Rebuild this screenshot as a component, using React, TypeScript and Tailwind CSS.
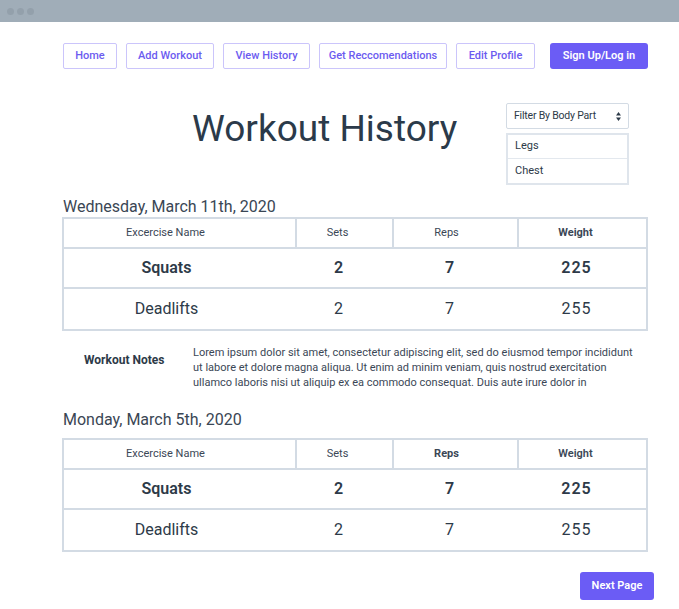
const navItems = ['Home', 'Add Workout', 'View History', 'Get Reccomendations', 'Edit Profile'];
const navWidths = ['w-[54px]', 'w-[88px]', 'w-[87px]', 'w-[128px]', 'w-[79px]'];

type Row = { name: string; sets: string; reps: string; weight: string };

const rows: Row[] = [
  { name: 'Squats', sets: '2', reps: '7', weight: '225' },
  { name: 'Deadlifts', sets: '2', reps: '7', weight: '255' },
];

function WorkoutTable({ repsBold, weightBold }: { repsBold: string; weightBold: string }) {
  return (
    <div className="border-2 border-[#d3dbe4] w-[586px]">
      <div className="flex h-[30px] border-b-2 border-[#d3dbe4] text-[11px] text-[#3b4756]">
        <div className="w-[233px] flex items-center justify-center pr-[28px] border-r-2 border-[#d3dbe4]">Excercise Name</div>
        <div className="w-[97px] flex items-center justify-center pr-[14px] border-r-2 border-[#d3dbe4]">Sets</div>
        <div className="w-[125px] flex items-center justify-center pr-[18px] border-r-2 border-[#d3dbe4]">
          <span className={repsBold}>Reps</span>
        </div>
        <div className="flex-1 flex items-center justify-center pr-[14px]">
          <span className={weightBold}>Weight</span>
        </div>
      </div>
      {rows.map((r, i) => (
        <div
          key={r.name}
          className={`flex h-[40px] items-center text-[16px] text-[#2d3a48] ${i === 0 ? 'border-b-2 border-[#d3dbe4] font-semibold' : ''}`}
        >
          <div className="w-[235px] text-center pr-[30px]">{r.name}</div>
          <div className="w-[97px] text-center pr-[18px]">{r.sets}</div>
          <div className="w-[125px] text-center pr-[18px]">{r.reps}</div>
          <div className="flex-1 text-center pr-[14px] tracking-[1px]">{r.weight}</div>
        </div>
      ))}
    </div>
  );
}

export default function App() {
  return (
    <div className="w-[679px] h-[609px] bg-white overflow-hidden" style={{ fontFamily: 'Roboto, "Liberation Sans", sans-serif' }}>
      <div className="h-[22px] bg-[#a0adb8] flex items-center gap-[3px] pl-[7px]">
        <div className="w-[7px] h-[7px] rounded-full bg-[#93a0ab]" />
        <div className="w-[7px] h-[7px] rounded-full bg-[#93a0ab]" />
        <div className="w-[7px] h-[7px] rounded-full bg-[#93a0ab]" />
      </div>

      <div className="ml-[62px] w-[587px]">
        <nav className="flex items-center mt-[21px] gap-[9px] pl-[1px]">
          {navItems.map((item, i) => (
            <button
              key={item}
              className={`${navWidths[i]} h-[26px] border border-[#cbc5fb] rounded-[2px] text-[11px] text-[#6c5cf0] font-medium`}
            >
              {item}
            </button>
          ))}
          <button className="ml-[6px] w-[98px] h-[26px] rounded-[3px] bg-[#6b5cf5] text-white text-[11px] font-semibold">
            Sign Up/Log in
          </button>
        </nav>

        <div className="flex mt-[34px]">
          <h1 className="ml-[130px] mt-[4px] text-[37px] leading-[44px] text-[#2b3a4a] font-normal">Workout History</h1>
          <div className="ml-auto mr-[20px] w-[123px]">
            <div className="h-[26px] border border-[#d3dbe4] rounded-[2px] flex items-center justify-between pl-[7px] pr-[7px] text-[10.5px] tracking-[-0.2px] text-[#2d3a48]">
              <span>Filter By Body Part</span>
              <svg width="5" height="9" viewBox="0 0 5 9" fill="#2d3a48">
                <path d="M2.5 0 L5 3.5 L0 3.5 Z" />
                <path d="M0 5.5 L5 5.5 L2.5 9 Z" />
              </svg>
            </div>
            <div className="mt-[4px] border-2 border-[#dfe5ec] text-[11px] text-[#2d3a48]">
              <div className="h-[24px] flex items-center px-[7px] border-b border-[#e3e8ee]">Legs</div>
              <div className="h-[24px] flex items-center px-[7px]">Chest</div>
            </div>
          </div>
        </div>

        <div className="mt-[12px] text-[16px] leading-[20px] text-[#3a4654] pl-[1px]">Wednesday, March 11th, 2020</div>
        <WorkoutTable repsBold="" weightBold="font-bold" />

        <div className="flex mt-[14px]">
          <div className="w-[131px] pl-[22px] pt-[6px] text-[12px] font-bold text-[#2d3a48]">Workout Notes</div>
          <p className="w-[450px] text-[11px] leading-[15px] text-[#3b4756]">
            Lorem ipsum dolor sit amet, consectetur adipiscing elit, sed do eiusmod tempor incididunt ut labore et dolore magna aliqua. Ut enim ad minim veniam, quis nostrud exercitation ullamco laboris nisi ut aliquip ex ea commodo consequat. Duis aute irure dolor in
          </p>
        </div>

        <div className="mt-[20px] text-[16px] leading-[20px] text-[#3a4654] pl-[1px]">Monday, March 5th, 2020</div>
        <div className="mt-[8px]">
          <WorkoutTable repsBold="font-bold" weightBold="font-semibold" />
        </div>

        <div className="flex justify-end mt-[20px] -mr-[5px]">
          <button className="w-[74px] h-[28px] rounded-[3px] bg-[#6b5cf5] text-white text-[11px] font-semibold">Next Page</button>
        </div>
      </div>
    </div>
  );
}
